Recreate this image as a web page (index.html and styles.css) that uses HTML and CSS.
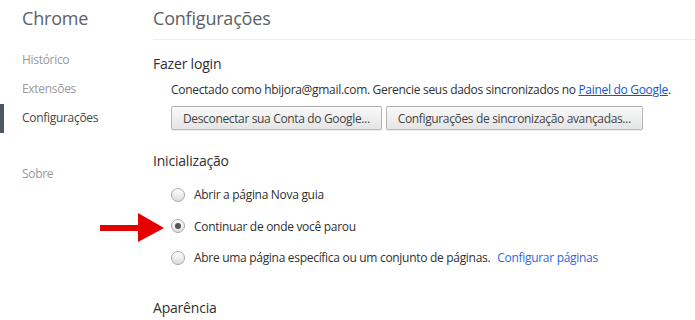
FILE: index.html
```html
<!DOCTYPE html>
<html lang="pt-BR">
<head>
    <meta charset="UTF-8">
    <title>Configurações</title>
    <link rel="stylesheet" href="styles.css">
</head>
<body>
    <div class="page">
        <div class="sidebar">
            <div class="brand">Chrome</div>
            <ul class="nav">
                <li>Histórico</li>
                <li>Extensões</li>
                <li class="active">Configurações</li>
                <li class="gap">Sobre</li>
            </ul>
        </div>
        <div class="main">
            <h1 class="title">Configurações</h1>

            <h3 class="section-title first">Fazer login</h3>
            <div class="section-body">
                <p class="line">Conectado como hbijora@gmail.com. Gerencie seus dados sincronizados no <a href="#">Painel do Google</a>.</p>
                <div class="buttons">
                    <button>Desconectar sua Conta do Google...</button>
                    <button>Configurações de sincronização avançadas...</button>
                </div>
            </div>

            <h3 class="section-title">Inicialização</h3>
            <div class="section-body radios">
                <label class="radio-row"><span class="radio"></span>Abrir a página Nova guia</label>
                <label class="radio-row"><span class="radio checked"></span>Continuar de onde você parou</label>
                <label class="radio-row"><span class="radio"></span>Abre uma página específica ou um conjunto de páginas. <a class="plain" href="#">Configurar páginas</a></label>
            </div>

            <h3 class="section-title after-radios">Aparência</h3>
        </div>
    </div>
    <svg class="arrow" width="66" height="30" viewBox="0 0 66 30">
        <rect x="0" y="12" width="42" height="6" fill="#e50000"/>
        <polygon points="38,0 64,15 38,29" fill="#e50000"/>
    </svg>
</body>
</html>
```

FILE: styles.css
```css
body {
    margin: 0;
    background: #fff;
    font-family: "Open Sans", "Noto Sans", sans-serif;
    color: #333;
    overflow: hidden;
    position: relative;
    height: 320px;
}
.page {
    display: flex;
}
.sidebar {
    width: 153px;
    flex-shrink: 0;
}
.brand {
    padding: 7px 0 0 22px;
    font-size: 18px;
    line-height: 22px;
    color: #5c6166;
    letter-spacing: -0.2px;
}
.nav {
    list-style: none;
    margin: 17px 0 0;
    padding: 0;
}
.nav li {
    font-size: 12px;
    line-height: 20px;
    padding: 4px 0 5px 22px;
    color: #999;
    letter-spacing: -0.3px;
}
.nav li.active {
    color: #464646;
    border-left: 4px solid #4e5661;
    padding-left: 18px;
}
.nav li.gap {
    margin-top: 27px;
}
.main {
    flex: 1;
}
.title {
    margin: 0;
    padding-top: 7px;
    height: 32px;
    font-size: 18px;
    line-height: 22px;
    font-weight: normal;
    color: #5c6166;
    border-bottom: 1px solid #eee;
    letter-spacing: -0.2px;
}
.section-title {
    margin: 21px 0 0;
    font-size: 14px;
    line-height: 20px;
    font-weight: normal;
    color: #303030;
    letter-spacing: -0.2px;
}
.section-title.first {
    margin-top: 14px;
}
.section-title.after-radios {
    margin-top: 24px;
}
.section-body {
    padding-left: 18px;
    font-size: 12px;
    color: #303030;
    letter-spacing: -0.3px;
}
.line {
    margin: 7px 0 0;
    line-height: 18px;
}
a {
    color: #15c;
}
a.plain {
    color: #3367d6;
    text-decoration: none;
    margin-left: 7px;
}
.buttons {
    display: flex;
    gap: 4px;
    margin-top: 7px;
}
.buttons button {
    height: 24px;
    margin: 0;
    padding: 0 11px;
    font-family: inherit;
    font-size: 12px;
    letter-spacing: -0.35px;
    color: #444;
    background: linear-gradient(#fafafa, #e4e4e4);
    border: 1px solid rgba(0, 0, 0, 0.25);
    border-radius: 2px;
    box-shadow: 0 1px 0 rgba(0, 0, 0, 0.08), inset 0 1px 2px rgba(255, 255, 255, 0.75);
}
.radios {
    display: flex;
    flex-direction: column;
    margin-top: 8px;
}
.radio-row {
    display: flex;
    align-items: center;
    height: 31.5px;
}
.radio {
    width: 14px;
    height: 14px;
    box-sizing: border-box;
    border-radius: 50%;
    border: 1px solid #aaa;
    background: linear-gradient(#fff, #dcdcdc);
    margin: 0 9px 0 0;
    display: flex;
    align-items: center;
    justify-content: center;
}
.radio.checked::after {
    content: "";
    width: 6px;
    height: 6px;
    border-radius: 50%;
    background: #555;
}
.arrow {
    position: absolute;
    left: 100px;
    top: 213px;
}
```
